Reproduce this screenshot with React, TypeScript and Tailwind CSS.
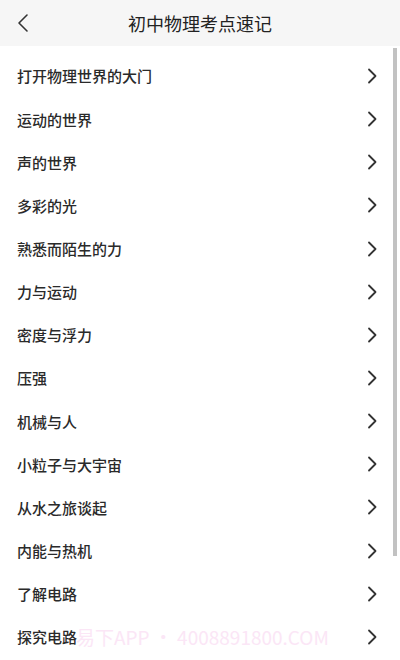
const chapters = [
  "打开物理世界的大门",
  "运动的世界",
  "声的世界",
  "多彩的光",
  "熟悉而陌生的力",
  "力与运动",
  "密度与浮力",
  "压强",
  "机械与人",
  "小粒子与大宇宙",
  "从水之旅谈起",
  "内能与热机",
  "了解电路",
  "探究电路",
];

function Chevron() {
  return (
    <svg width="12" height="16" viewBox="0 0 12 16" fill="none">
      <path d="M3 1.5 L9.5 8 L3 14.5" stroke="#333" strokeWidth="1.8" strokeLinecap="round" strokeLinejoin="round" />
    </svg>
  );
}

export default function App() {
  return (
    <div
      className="relative w-[400px] h-[660px] overflow-hidden bg-white"
      style={{ fontFamily: '"Noto Sans CJK SC", "Noto Sans", sans-serif' }}
    >
      <header className="flex h-[46px] items-center bg-[#f6f6f6] px-[14px]">
        <button className="flex h-[22px] w-[18px] items-center justify-center">
          <svg width="14" height="20" viewBox="0 0 14 20" fill="none">
            <path d="M11 2 L3 10 L11 18" stroke="#333" strokeWidth="1.6" strokeLinecap="round" strokeLinejoin="round" />
          </svg>
        </button>
        <h1 className="flex-1 text-center text-[18px] leading-none text-[#222] -mt-[1px]">初中物理考点速记</h1>
        <div className="w-[18px]" />
      </header>

      <ul className="pt-[8.4px]">
        {chapters.map((name) => (
          <li key={name} className="flex h-[43.15px] items-center justify-between pl-[17px] pr-[22px]">
            <span className="text-[15px] font-medium leading-none text-[#2a2a2a]">{name}</span>
            <Chevron />
          </li>
        ))}
      </ul>

      {/* overlay scrollbar */}
      <div className="absolute right-[3px] top-[48px] h-[508px] w-[4px] bg-[#c2c2c2]" />

      {/* watermark */}
      <div className="pointer-events-none absolute left-[76px] top-[627px] text-[19px] leading-none text-[#fbe6f6]">
        易下APP • 4008891800.COM
      </div>
    </div>
  );
}
